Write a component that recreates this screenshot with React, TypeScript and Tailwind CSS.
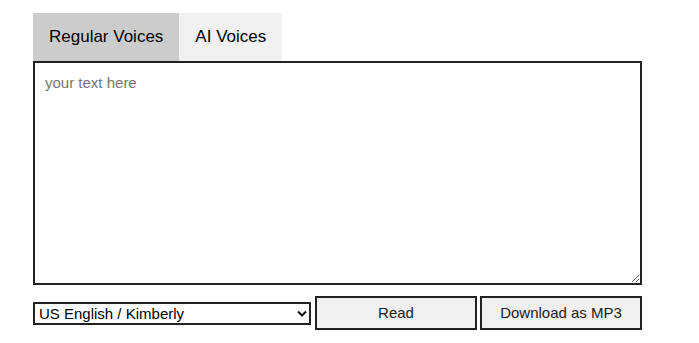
import React from "react";

export default function App() {
  return (
    <div className="w-[699px] h-[343px] bg-white" style={{ fontFamily: '"Liberation Sans", Arial, sans-serif' }}>
      <div className="ml-[33px] pt-[13px] w-[609px] flex flex-col">
        <div className="flex h-[48px]">
          <button className="px-[16px] bg-[#cccccc] text-[17px] text-black">Regular Voices</button>
          <button className="px-[16px] bg-[#f1f1f1] text-[17px] text-black">AI Voices</button>
        </div>
        <textarea
          placeholder="your text here"
          className="w-[609px] h-[224px] border-2 border-[#222222] pt-[11px] px-[10px] pb-[10px] text-[15px] leading-[17px] placeholder:text-[#757575] outline-none"
          style={{ fontFamily: '"Liberation Sans", Arial, sans-serif' }}
        />
        <div className="flex items-start mt-[11px] h-[34px]">
          <div className="relative w-[278px] h-[23px] mt-[6px]">
            <select
              className="appearance-none w-full h-full border-2 border-[#222222] bg-white pl-[4px] text-[15px] leading-[17px] text-black outline-none"
              style={{ fontFamily: '"Liberation Sans", Arial, sans-serif' }}
              defaultValue="kimberly"
            >
              <option value="kimberly">US English / Kimberly</option>
            </select>
            <svg className="absolute right-[4px] top-[8px] pointer-events-none" width="10" height="7" viewBox="0 0 10 7">
              <path d="M1 1.5 L5 5.5 L9 1.5" stroke="#111" strokeWidth="2" fill="none" />
            </svg>
          </div>
          <button className="ml-[4px] w-[162px] h-[34px] pt-[1px] border-2 border-[#222222] bg-[#f0f0f0] text-[15px] text-[#222]">Read</button>
          <button className="ml-[3px] w-[162px] h-[34px] pt-[1px] border-2 border-[#222222] bg-[#f0f0f0] text-[15px] text-[#222]">Download as MP3</button>
        </div>
      </div>
    </div>
  );
}
